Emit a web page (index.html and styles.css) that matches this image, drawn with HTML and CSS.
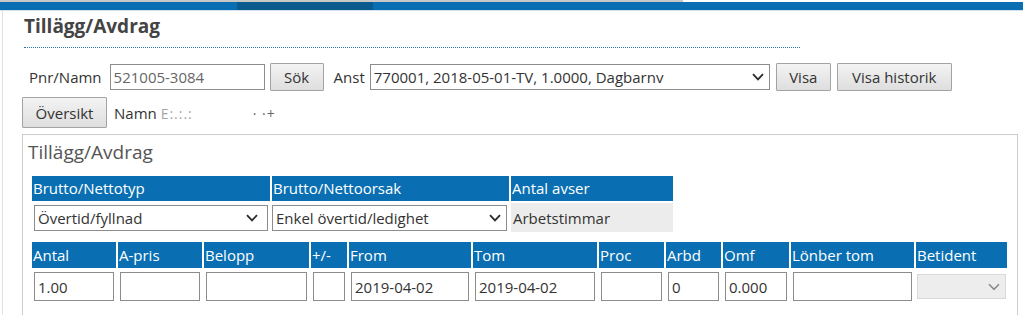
FILE: index.html
```html
<!DOCTYPE html>
<html lang="sv">
<head>
<meta charset="utf-8">
<title>Tillägg/Avdrag</title>
<link rel="stylesheet" href="styles.css">
</head>
<body>
<div class="topbar">
  <div class="topbar-strip"></div>
  <div class="topbar-blue"><span class="seg seg-a"></span><span class="seg seg-b"></span><span class="seg seg-c"></span></div>
</div>
<div class="page">
  <h1 class="title">Tillägg/Avdrag</h1>
  <div class="search-row">
    <label class="lbl lbl-pnr" for="pnr">Pnr/Namn</label>
    <input id="pnr" class="inp inp-pnr" value="521005-3084">
    <button class="btn btn-sok">Sök</button>
    <span class="lbl lbl-anst">Anst</span>
    <span class="sel-wrap sel-anst">
      <select class="sel"><option>770001, 2018-05-01-TV, 1.0000, Dagbarnv</option></select>
      <svg class="chev" width="12" height="8" viewBox="0 0 12 8"><path d="M1 1.2 L6 6.4 L11 1.2" /></svg>
    </span>
    <button class="btn btn-visa">Visa</button>
    <button class="btn btn-hist">Visa historik</button>
  </div>
  <div class="name-row">
    <button class="btn btn-oversikt">Översikt</button>
    <span class="lbl lbl-namn">Namn <span class="redacted">E:.:.:</span><span class="redacted redacted-2">· ·+</span></span>
  </div>
  <section class="panel">
    <h2 class="panel-title">Tillägg/Avdrag</h2>
    <table class="grid grid-top">
      <colgroup><col class="c238"><col class="c237"><col class="c162"></colgroup>
      <tr class="head">
        <th>Brutto/Nettotyp</th><th>Brutto/Nettoorsak</th><th>Antal avser</th>
      </tr>
      <tr class="body-top">
        <td><span class="sel-wrap sel-full"><select class="sel"><option>Övertid/fyllnad</option></select><svg class="chev chev-t" width="12" height="8" viewBox="0 0 12 8"><path d="M1 1.2 L6 6.4 L11 1.2" /></svg></span></td>
        <td class="td-flush"><span class="sel-wrap sel-full"><select class="sel"><option>Enkel övertid/ledighet</option></select><svg class="chev" width="12" height="8" viewBox="0 0 12 8"><path d="M1 1.2 L6 6.4 L11 1.2" /></svg></span></td>
        <td class="readonly">Arbetstimmar</td>
      </tr>
    </table>
    <table class="grid grid-bottom">
      <colgroup>
        <col class="w84"><col class="w84"><col class="w105"><col class="w36"><col class="w122"><col class="w124"><col class="w65"><col class="w55"><col class="w66"><col class="w123"><col class="w91">
      </colgroup>
      <tr class="head">
        <th>Antal</th><th>A-pris</th><th>Belopp</th><th>+/-</th><th>From</th><th>Tom</th><th>Proc</th><th>Arbd</th><th>Omf</th><th>Lönber tom</th><th>Betident</th>
      </tr>
      <tr class="body-bottom">
        <td><input class="inp inp-cell" value="1.00"></td>
        <td><input class="inp inp-cell" value=""></td>
        <td><input class="inp inp-cell" value=""></td>
        <td><input class="inp inp-cell" value=""></td>
        <td><input class="inp inp-cell" value="2019-04-02"></td>
        <td><input class="inp inp-cell" value="2019-04-02"></td>
        <td><input class="inp inp-cell" value=""></td>
        <td><input class="inp inp-cell" value="0"></td>
        <td><input class="inp inp-cell" value="0.000"></td>
        <td><input class="inp inp-cell" value=""></td>
        <td class="td-dis"><span class="sel-wrap sel-dis"><select class="sel" disabled><option></option></select><svg class="chev chev-dis" width="12" height="8" viewBox="0 0 12 8"><path d="M1 1.2 L6 6.4 L11 1.2" /></svg></span></td>
      </tr>
    </table>
  </section>
</div>
</body>
</html>
```
FILE: styles.css
```css
* { box-sizing: border-box; }

body {
  margin: 0;
  font-family: "Open Sans", "Liberation Sans", sans-serif;
  font-size: 15px;
  color: #333;
  background: #fff;
  overflow: hidden;
}

/* top bar */
.topbar { height: 11px; border-bottom: 1px solid #d3e2ee; }
.topbar-strip { width: 683px; height: 2px; background: #c8c8c8; }
.topbar-blue { display: flex; height: 8px; }
.seg-a { width: 237px; background: #0a6fb2; }
.seg-b { width: 136px; background: #0a5a8d; }
.seg-c { flex: 1; background: #0a6fb2; }

.page {
  margin-left: 2px;
  border-left: 1px solid #e2e2e2;
  padding-left: 19px;
  min-height: 304px;
}

.title {
  margin: 0 0 0 2px;
  padding-top: 2px;
  width: 776px;
  height: 37px;
  font-size: 19px;
  line-height: 26px;
  font-weight: 700;
  color: #444;
  border-bottom: 1px dotted #2a72ae;
}

/* controls */
.lbl { color: #333; white-space: nowrap; }

.inp {
  height: 26px;
  border: 1px solid #8c8c8c;
  padding: 0 3px;
  font: inherit;
  color: #333;
  background: #fff;
  outline: none;
}

.btn {
  font: inherit;
  color: #333;
  border: 1px solid #a3a3a3;
  border-radius: 1px;
  background: linear-gradient(#f3f3f3, #dedede);
  padding: 0;
  cursor: pointer;
}

.sel-wrap { position: relative; display: inline-block; }
.sel {
  appearance: none;
  -webkit-appearance: none;
  width: 100%;
  height: 26px;
  border: 1px solid #8c8c8c;
  border-radius: 0;
  background: #fff;
  font: inherit;
  color: #333;
  padding: 0 24px 0 3px;
  outline: none;
}
.chev {
  position: absolute;
  right: 6px;
  top: 50%;
  transform: translateY(-50%);
  pointer-events: none;
}
.chev path { fill: none; stroke: #2c2c2c; stroke-width: 1.8; }
.chev-t { right: 10px; }

.search-row {
  display: flex;
  align-items: center;
  height: 28px;
  margin-top: 15px;
  margin-left: 7px;
}
.lbl-pnr { margin-right: 8px; }
.inp-pnr { width: 155px; color: #666; }
.btn-sok { width: 54px; height: 28px; margin-left: 5px; }
.lbl-anst { margin-left: 10px; margin-right: 5px; }
.sel-anst { width: 400px; }
.btn-visa { width: 55px; height: 28px; margin-left: 6px; }
.btn-hist { width: 115px; height: 28px; margin-left: 6px; }

.name-row {
  display: flex;
  align-items: center;
  margin-top: 6px;
}
.btn-oversikt { width: 85px; height: 31px; }
.lbl-namn { margin-left: 7px; }
.redacted { color: #a5a5a5; letter-spacing: 1px; font-size: 14px; }
.redacted-2 { margin-left: 60px; color: #666; }

/* panel */
.panel {
  margin-top: 6px;
  width: 996px;
  min-height: 200px;
  border: 1px solid #cdcdcd;
  padding-left: 5px;
}
.panel-title {
  margin: 4px 0 0 0;
  font-size: 19px;
  line-height: 26px;
  font-weight: 400;
  color: #555;
}

.grid {
  table-layout: fixed;
  border-collapse: separate;
  border-spacing: 2px;
  margin-left: 2px;
}
.grid th {
  background: #0a6fb2;
  color: #fff;
  font-weight: 400;
  text-align: left;
  padding: 0 1px;
  white-space: nowrap;
  overflow: hidden;
}
.grid td { padding: 0; }

.grid-top { margin-top: 9px; width: 645px; }
.grid-top .head th { height: 25px; line-height: 25px; }
.body-top td { height: 29px; padding: 2px 2px 0 2px; vertical-align: top; }
.body-top td.td-flush { padding-left: 0; }
.body-top td.readonly {
  background: #ececec;
  padding: 0 2px;
  vertical-align: middle;
}
.sel-full { width: 100%; display: block; }

.grid-bottom { margin-top: 6px; width: 979px; }
.grid-bottom .head th { height: 26px; line-height: 26px; }
.body-bottom td { height: 33px; padding: 2px; vertical-align: middle; }
.body-bottom td.td-dis { padding-left: 1px; }
.inp-cell { width: 100%; height: 29px; }

.sel-dis { width: 89px; display: block; }
.sel-dis .sel { height: 25px; background: #e6e6e6; border-color: #c9c9c9; }
.chev-dis path { stroke: #8a8a8a; stroke-width: 1.6; }

.c238 { width: 238px; }
.c237 { width: 237px; }
.c162 { width: 162px; }
.w84 { width: 84px; }
.w105 { width: 105px; }
.w36 { width: 36px; }
.w122 { width: 122px; }
.w124 { width: 124px; }
.w65 { width: 65px; }
.w55 { width: 55px; }
.w66 { width: 66px; }
.w123 { width: 123px; }
.w91 { width: 91px; }
```
